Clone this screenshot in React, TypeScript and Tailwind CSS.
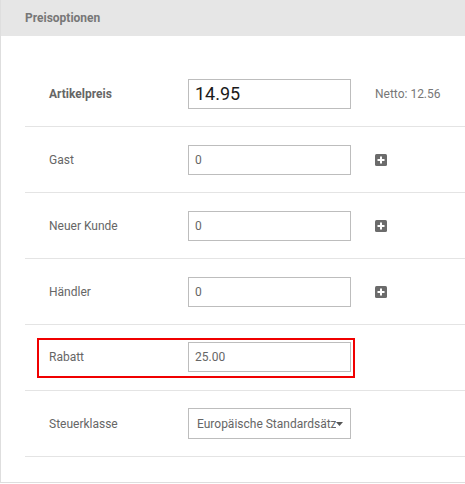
import { type ReactNode } from "react";

type PriceRow = {
  label: string;
  value: string;
};

const rows: PriceRow[] = [
  { label: "Gast", value: "0" },
  { label: "Neuer Kunde", value: "0" },
  { label: "Händler", value: "0" },
];

function PlusIcon() {
  return (
    <svg width="12" height="12" viewBox="0 0 12 12" aria-hidden="true">
      <rect x="0" y="0" width="12" height="12" rx="1.5" fill="#6b6b6b" />
      <rect x="5" y="2.5" width="2" height="7" fill="#fff" />
      <rect x="2.5" y="5" width="7" height="2" fill="#fff" />
    </svg>
  );
}

function Row({ children }: { children: ReactNode }) {
  return (
    <div className="flex h-[66px] items-center border-b border-[#e4e4e4]">{children}</div>
  );
}

function TextField({ value, big }: { value: string; big?: boolean }) {
  return (
    <div
      className={
        big
          ? "flex h-[30px] w-[163px] shrink-0 items-center border border-[#bdbdbd] bg-white pl-[6px] text-[18px] text-[#1a1a1a]"
          : "flex h-[30px] w-[163px] shrink-0 items-center border border-[#bdbdbd] bg-white pl-[6px] text-[12px] text-[#666]"
      }
    >
      {value}
    </div>
  );
}

export default function App() {
  return (
    <div className="h-[484px] w-[465px] overflow-hidden bg-white font-['Roboto','Liberation_Sans',sans-serif]">
      <div className="h-[483px] w-[480px] border-b border-l border-[#dedede]">
        <div className="flex h-[36px] items-center bg-[#e6e6e6] px-[24px] text-[12px] font-bold text-[#777]">
          Preisoptionen
        </div>

        <div className="pl-[24px] pt-[25px]">
          <Row>
            <span className="w-[163px] shrink-0 pl-[24px] text-[12px] font-bold text-[#666]">Artikelpreis</span>
            <TextField value="14.95" big />
            <span className="ml-[24px] text-[12px] text-[#777]">Netto: 12.56</span>
          </Row>

          {rows.map((row) => (
            <Row key={row.label}>
              <span className="w-[163px] shrink-0 pl-[24px] text-[12px] text-[#666]">{row.label}</span>
              <TextField value={row.value} />
              <span className="ml-[24px] flex">
                <PlusIcon />
              </span>
            </Row>
          ))}

          <Row>
            <div className="ml-[12px] flex items-center border-2 border-[#f00000] pb-[4px] pl-[10px] pr-[2px] pt-[2px]">
              <span className="w-[139px] shrink-0 text-[12px] text-[#666]">Rabatt</span>
              <TextField value="25.00" />
            </div>
          </Row>

          <Row>
            <span className="w-[163px] shrink-0 pl-[24px] text-[12px] text-[#666]">Steuerklasse</span>
            <div className="flex h-[31px] w-[163px] shrink-0 items-center border border-[#bdbdbd] bg-white pl-[8px] pr-[7px] text-[12px] text-[#666]">
              <span className="flex-1 overflow-hidden whitespace-nowrap">Europäische Standardsätze</span>
              <svg width="7" height="4" viewBox="0 0 7 4" aria-hidden="true" className="shrink-0">
                <path d="M0 0h7L3.5 4z" fill="#555" />
              </svg>
            </div>
          </Row>
        </div>
      </div>
    </div>
  );
}
